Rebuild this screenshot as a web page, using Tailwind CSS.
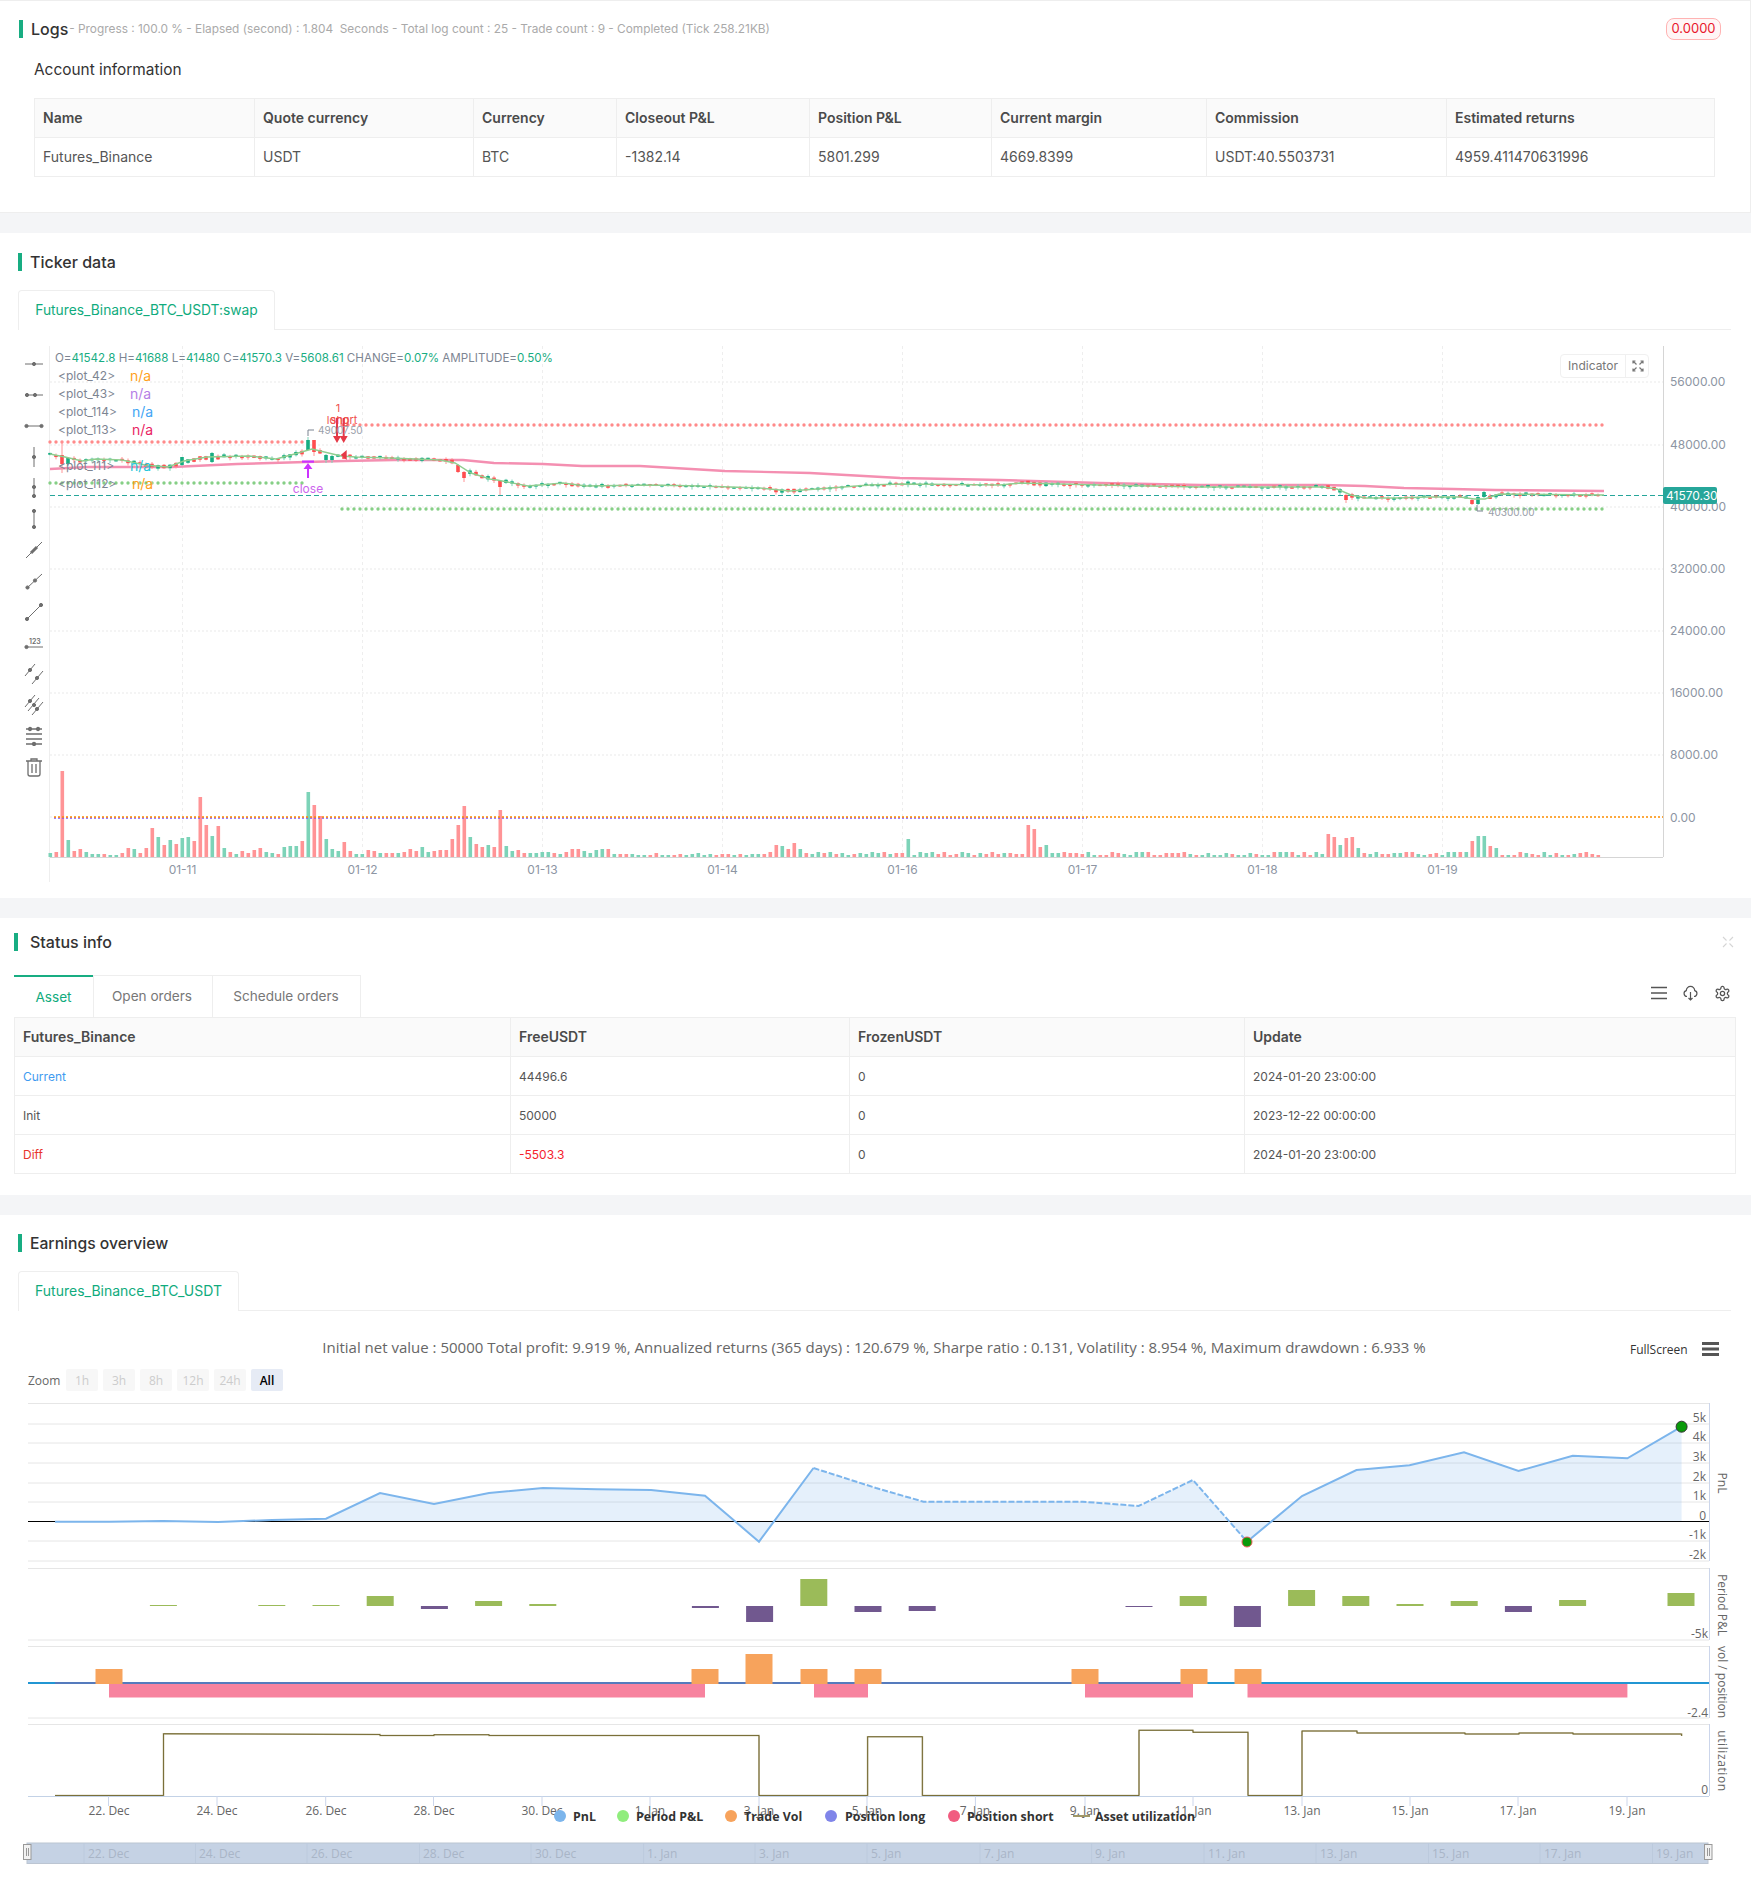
<!DOCTYPE html>
<html lang="en">
  <head>
    <meta charset="UTF-8" />
    <title>Backtest result</title>
    <script src="https://cdn.jsdelivr.net/npm/@tailwindcss/browser@4"></script>
  </head>
  <body class="bg-[#f4f5f7] font-['Inter',sans-serif] text-[#4a4a4a]">
    <!-- Logs -->
    <section class="h-[213px] bg-white border-t border-b border-r border-[#eeeeee] pt-[17px]">
      <div class="flex h-[22px] items-center justify-between pl-[19px] pr-[29px]">
        <div class="flex items-center">
          <span class="mr-2 h-[18px] w-1 bg-[#18ad82]"></span>
          <span class="text-base font-medium text-[#333]">Logs</span>
          <span class="ml-[1px] whitespace-pre pt-[1px] text-[11.85px] text-[#aaaaaa]">- Progress : 100.0 % - Elapsed (second) : 1.804  Seconds - Total log count : 25 - Trade count : 9 - Completed (Tick 258.21KB)</span>
        </div>
        <span class="flex h-[22px] w-[55px] items-center justify-center rounded-[8px] border border-[#ffb3b3] bg-[#fff5f5] text-[13px] text-[#e8172c]">0.0000</span>
      </div>
      <h3 class="ml-[34px] mt-[18px] h-6 text-[15.4px] leading-6 text-[#333]">Account information</h3>
      <table class="ml-[34px] mt-[16px] w-[1680px] table-fixed border-collapse text-sm">
        <colgroup>
          <col class="w-[220px]" /><col class="w-[219px]" /><col class="w-[143px]" /><col class="w-[193px]" /><col class="w-[182px]" /><col class="w-[215px]" /><col class="w-[240px]" /><col class="w-[268px]" />
        </colgroup>
        <thead class="bg-[#fafafa] text-left font-semibold">
          <tr class="h-[39px]">
            <th class="border border-[#eeeeee] px-2 font-semibold">Name</th>
            <th class="border border-[#eeeeee] px-2 font-semibold">Quote currency</th>
            <th class="border border-[#eeeeee] px-2 font-semibold">Currency</th>
            <th class="border border-[#eeeeee] px-2 font-semibold">Closeout P&amp;L</th>
            <th class="border border-[#eeeeee] px-2 font-semibold">Position P&amp;L</th>
            <th class="border border-[#eeeeee] px-2 font-semibold">Current margin</th>
            <th class="border border-[#eeeeee] px-2 font-semibold">Commission</th>
            <th class="border border-[#eeeeee] px-2 font-semibold">Estimated returns</th>
          </tr>
        </thead>
        <tbody class="text-[#555]">
          <tr class="h-[39px]">
            <td class="border border-[#eeeeee] px-2">Futures_Binance</td>
            <td class="border border-[#eeeeee] px-2">USDT</td>
            <td class="border border-[#eeeeee] px-2">BTC</td>
            <td class="border border-[#eeeeee] px-2">-1382.14</td>
            <td class="border border-[#eeeeee] px-2">5801.299</td>
            <td class="border border-[#eeeeee] px-2">4669.8399</td>
            <td class="border border-[#eeeeee] px-2">USDT:40.5503731</td>
            <td class="border border-[#eeeeee] px-2">4959.411470631996</td>
          </tr>
        </tbody>
      </table>
    </section>

    <!-- Ticker data -->
    <section class="mt-5 h-[665px] bg-white pt-5">
      <div class="flex h-[18px] items-center pl-[18px]">
        <span class="mr-2 h-[18px] w-1 bg-[#18ad82]"></span>
        <span class="text-base font-medium text-[#333]">Ticker data</span>
      </div>
      <div class="ml-[18px] mt-[19px] h-[40px] w-[1713px] border-b border-[#eeeeee]">
        <div class="flex h-10 w-[257px] items-center justify-center rounded-t-[4px] border border-b-0 border-[#eeeeee] bg-white pb-[1px] text-[13.8px] text-[#10ab7d]">Futures_Binance_BTC_USDT:swap</div>
      </div>
      <div class="relative h-[568px]">
        <svg class="absolute inset-0 block" width="1751" height="568" viewBox="0 330 1751 568">
          <g id="grid"></g>
          <g id="volume"></g>
          <g id="overlay"></g>
          <g id="candles"></g>
          <g id="overlayTop"></g>
          <g class="text-xs fill-[#8d95a3]">
            <text x="1670" y="386">56000.00</text>
            <text x="1670" y="449">48000.00</text>
            <text x="1670" y="511">40000.00</text>
            <text x="1670" y="573">32000.00</text>
            <text x="1670" y="635">24000.00</text>
            <text x="1670" y="697">16000.00</text>
            <text x="1670" y="759">8000.00</text>
            <text x="1670" y="822">0.00</text>
          </g>
          <g class="text-xs fill-[#8d95a3]" text-anchor="middle">
            <text x="182.5" y="874">01-11</text>
            <text x="362.5" y="874">01-12</text>
            <text x="542.5" y="874">01-13</text>
            <text x="722.5" y="874">01-14</text>
            <text x="902.5" y="874">01-16</text>
            <text x="1082.5" y="874">01-17</text>
            <text x="1262.5" y="874">01-18</text>
            <text x="1442.5" y="874">01-19</text>
          </g>
          <rect x="1663" y="487" width="54" height="17" rx="2" fill="#26a69a" />
          <text x="1666" y="500" class="text-xs fill-white">41570.30</text>
          <!-- trade marks -->
          <g class="text-[11px] fill-[#ef5350]" text-anchor="middle">
            <text x="338" y="412">1</text>
            <text x="338" y="424">long</text>
            <text x="344" y="424">short</text>
          </g>
          <path d="M337 418V438M343.7 418V438" stroke="#e53946" stroke-width="2" />
          <path d="M333 436H341L337 443ZM339.7 436H347.7L343.7 443Z" fill="#e53946" />
          <path d="M340.7 455L346.7 450V460Z" fill="#e53946" />
          <path d="M314 430H308V436" fill="none" stroke="#7a8391" stroke-width="1" />
          <text x="318" y="434" class="text-[10px] fill-[#9aa0aa]">49007.50</text>
          <path d="M1477 505V511H1483" fill="none" stroke="#7a8391" stroke-width="1" />
          <text x="1488" y="516" class="text-[10px] fill-[#9aa0aa]">40300.00</text>
          <rect x="302" y="460.5" width="12" height="2.2" fill="#cc33ff" />
          <path d="M308 463L312.5 469H309V478H307V469H303.5Z" fill="#cc33ff" />
          <text x="308" y="493" text-anchor="middle" class="text-xs fill-[#cc66ee]">close</text>
        </svg>

        <!-- drawing tools -->
        <div class="absolute left-[23px] top-[18.5px] flex flex-col text-[#6e6e6e]">
          <svg class="my-[5.5px] h-5 w-[22px]" viewBox="0 0 20 20" fill="none" stroke="currentColor"><path d="M1 10H19" /><circle cx="10" cy="10" r="1.6" fill="currentColor" /></svg>
          <svg class="my-[5.5px] h-5 w-[22px]" viewBox="0 0 20 20" fill="none" stroke="currentColor"><path d="M1 10H19" /><circle cx="3" cy="10" r="1.6" fill="currentColor" /><circle cx="11" cy="10" r="1.6" fill="currentColor" /></svg>
          <svg class="my-[5.5px] h-5 w-[22px]" viewBox="0 0 20 20" fill="none" stroke="currentColor"><path d="M2 10H18" /><circle cx="2.5" cy="10" r="1.6" fill="currentColor" /><circle cx="17.5" cy="10" r="1.6" fill="currentColor" /></svg>
          <svg class="my-[5.5px] h-5 w-[22px]" viewBox="0 0 20 20" fill="none" stroke="currentColor"><path d="M10 0V20" /><circle cx="10" cy="10" r="1.6" fill="currentColor" /></svg>
          <svg class="my-[5.5px] h-5 w-[22px]" viewBox="0 0 20 20" fill="none" stroke="currentColor"><path d="M10 0V20" /><circle cx="10" cy="9" r="1.6" fill="currentColor" /><circle cx="10" cy="18" r="1.6" fill="currentColor" /></svg>
          <svg class="my-[5.5px] h-5 w-[22px]" viewBox="0 0 20 20" fill="none" stroke="currentColor"><path d="M10 2V18" /><circle cx="10" cy="2" r="1.6" fill="currentColor" /><circle cx="10" cy="18" r="1.6" fill="currentColor" /></svg>
          <svg class="my-[5.5px] h-5 w-[22px]" viewBox="0 0 20 20" fill="none" stroke="currentColor"><path d="M2 18L18 2" /><path d="M7 13L13 7" stroke-width="3" /></svg>
          <svg class="my-[5.5px] h-5 w-[22px]" viewBox="0 0 20 20" fill="none" stroke="currentColor"><path d="M3 17L18 3" /><circle cx="3.5" cy="16.5" r="1.6" fill="currentColor" /><circle cx="11" cy="9.5" r="1.6" fill="currentColor" /></svg>
          <svg class="my-[5.5px] h-5 w-[22px]" viewBox="0 0 20 20" fill="none" stroke="currentColor"><path d="M3 17L17 3" /><circle cx="3" cy="17" r="1.6" fill="currentColor" /><circle cx="17" cy="3" r="1.6" fill="currentColor" /></svg>
          <svg class="my-[5.5px] h-5 w-[22px]" viewBox="0 0 20 20" fill="none" stroke="currentColor"><text x="5" y="11" stroke="none" fill="currentColor" class="text-[7px] font-semibold">123</text><path d="M2 14H19" /><circle cx="2.5" cy="14" r="1.6" fill="currentColor" /></svg>
          <svg class="my-[5.5px] h-5 w-[22px]" viewBox="0 0 20 20" fill="none" stroke="currentColor"><path d="M1 12L11 0M8 20L19 7" /><circle cx="6" cy="6" r="1.6" fill="currentColor" /><circle cx="13" cy="14" r="1.6" fill="currentColor" /></svg>
          <svg class="my-[5.5px] h-5 w-[22px]" viewBox="0 0 20 20" fill="none" stroke="currentColor"><path d="M1 12L11 0M4 16L15 3M8 20L19 7" /><circle cx="6" cy="6" r="1.6" fill="currentColor" /><circle cx="10" cy="10" r="1.6" fill="currentColor" /><circle cx="13" cy="14" r="1.6" fill="currentColor" /></svg>
          <svg class="my-[5.5px] h-5 w-[22px]" viewBox="0 0 20 20" fill="none" stroke="currentColor" stroke-width="1.3"><path d="M2 3H18M2 8H18M2 13H18M2 18H18" /><circle cx="6" cy="3" r="1.5" fill="currentColor" /><circle cx="14" cy="3" r="1.5" fill="currentColor" /><circle cx="10" cy="18" r="1.5" fill="currentColor" /></svg>
          <svg class="my-[5.5px] h-5 w-[22px]" viewBox="0 0 20 20" fill="none" stroke="currentColor" stroke-width="1.3"><path d="M2 4H18M7 4V2H13V4M4 4V17Q4 19 6 19H14Q16 19 16 17V4M8 7V16M12 7V16" /></svg>
        </div>

        <!-- series legend -->
        <div class="absolute left-[55px] top-[19px] text-[11.6px] leading-[18px] text-[#7d8592]">
          <div class="whitespace-pre">O=<span class="text-[#18ad82]">41542.8</span> H=<span class="text-[#18ad82]">41688</span> L=<span class="text-[#18ad82]">41480</span> C=<span class="text-[#18ad82]">41570.3</span> V=<span class="text-[#18ad82]">5608.61</span> CHANGE=<span class="text-[#18ad82]">0.07%</span> AMPLITUDE=<span class="text-[#18ad82]">0.50%</span></div>
          <div class="ml-[3px] flex h-[18px] text-xs/[18px]"><span class="w-[72px]">&lt;plot_42&gt;</span><span class="text-sm/[18px] text-[#ff9f1c]">n/a</span></div>
          <div class="ml-[3px] flex h-[18px] text-xs/[18px]"><span class="w-[72px]">&lt;plot_43&gt;</span><span class="text-sm/[18px] text-[#b47ee5]">n/a</span></div>
          <div class="ml-[3px] flex h-[18px] text-xs/[18px]"><span class="w-[74px]">&lt;plot_114&gt;</span><span class="text-sm/[18px] text-[#42a5f5]">n/a</span></div>
          <div class="ml-[3px] flex h-[18px] text-xs/[18px]"><span class="w-[74px]">&lt;plot_113&gt;</span><span class="text-sm/[18px] text-[#e91e63]">n/a</span></div>
          <div class="ml-[3px] mt-[18px] flex h-[18px] text-xs/[18px]"><span class="w-[72px]">&lt;plot_111&gt;</span><span class="text-sm/[18px] text-[#26c6da]">n/a</span></div>
          <div class="ml-[3px] flex h-[18px] text-xs/[18px]"><span class="w-[74px]">&lt;plot_112&gt;</span><span class="text-sm/[18px] text-[#ff9f1c]">n/a</span></div>
        </div>

        <div class="absolute left-[1560px] top-[24px] flex h-6 w-[89px] items-center rounded-[4px] border border-[#f0f0f0] bg-white text-xs text-[#777]">
          <span class="flex h-full w-[65px] items-center justify-center border-r border-[#f0f0f0]">Indicator</span>
          <svg class="ml-[6px] h-3 w-3" viewBox="0 0 12 12" fill="none" stroke="#777" stroke-width="1.2"><path d="M1 1L4.5 4.5M11 1L7.5 4.5M1 11L4.5 7.5M11 11L7.5 7.5M1 3.5V1H3.5M8.5 1H11V3.5M1 8.5V11H3.5M8.5 11H11V8.5" /></svg>
        </div>
      </div>
    </section>

    <!-- Status info -->
    <section class="mt-5 h-[277px] bg-white pt-[15px]">
      <div class="flex h-[18px] items-center justify-between pl-[14px] pr-[17px]">
        <div class="flex items-center">
          <span class="mr-3 h-[18px] w-1 bg-[#18ad82]"></span>
          <span class="text-base font-medium text-[#333]">Status info</span>
        </div>
        <svg class="h-3 w-3" viewBox="0 0 12 12" fill="none" stroke="#d5d5d5" stroke-width="1.1"><path d="M1 1L4.5 4.5M11 1L7.5 4.5M1 11L4.5 7.5M11 11L7.5 7.5" /></svg>
      </div>
      <div class="ml-[14px] mt-6 flex h-[42px] w-[1721px] items-stretch justify-between">
        <div class="flex text-[13.6px]">
          <span class="flex w-[79px] items-center justify-center border-t-2 border-[#18ad82] text-[#10ab7d]">Asset</span>
          <span class="flex w-[120px] items-center justify-center border-l border-r border-t border-[#eeeeee] pr-[2px] text-[#777]">Open orders</span>
          <span class="flex w-[148px] items-center justify-center border-r border-t border-[#eeeeee] pr-[1px] text-[#777]">Schedule orders</span>
        </div>
        <div class="flex items-center gap-[15px] pb-[6px] text-[#555]">
          <svg class="h-4 w-4" viewBox="0 0 16 16" fill="none" stroke="currentColor" stroke-width="1.5"><path d="M0 2.5H16M0 8H16M0 13.5H16" /></svg>
          <svg class="h-4 w-[17px]" viewBox="0 0 16 16" fill="none" stroke="currentColor" stroke-width="1.2"><path d="M4.5 11.5A3 3 0 0 1 3.8 5.6 4.2 4.2 0 0 1 12.2 5.6 3 3 0 0 1 11.5 11.5M8 7V15M6 13L8 15L10 13" /></svg>
          <svg class="mr-[4px] h-[17px] w-[17px]" viewBox="0 0 24 24" fill="none" stroke="currentColor" stroke-width="1.8"><path d="M12.22 2h-.44a2 2 0 0 0-2 2v.18a2 2 0 0 1-1 1.73l-.43.25a2 2 0 0 1-2 0l-.15-.08a2 2 0 0 0-2.73.73l-.22.38a2 2 0 0 0 .73 2.73l.15.1a2 2 0 0 1 1 1.72v.51a2 2 0 0 1-1 1.74l-.15.09a2 2 0 0 0-.73 2.73l.22.38a2 2 0 0 0 2.73.73l.15-.08a2 2 0 0 1 2 0l.43.25a2 2 0 0 1 1 1.73V20a2 2 0 0 0 2 2h.44a2 2 0 0 0 2-2v-.18a2 2 0 0 1 1-1.73l.43-.25a2 2 0 0 1 2 0l.15.08a2 2 0 0 0 2.73-.73l.22-.39a2 2 0 0 0-.73-2.73l-.15-.08a2 2 0 0 1-1-1.74v-.5a2 2 0 0 1 1-1.74l.15-.09a2 2 0 0 0 .73-2.73l-.22-.38a2 2 0 0 0-2.73-.73l-.15.08a2 2 0 0 1-2 0l-.43-.25a2 2 0 0 1-1-1.73V4a2 2 0 0 0-2-2z" /><circle cx="12" cy="12" r="3" /></svg>
        </div>
      </div>
      <table class="ml-[14px] w-[1721px] table-fixed border-collapse text-xs">
        <colgroup>
          <col class="w-[496px]" /><col class="w-[339px]" /><col class="w-[395px]" /><col class="w-[491px]" />
        </colgroup>
        <thead class="bg-[#fafafa] text-left text-sm">
          <tr class="h-[39px]">
            <th class="border border-[#eeeeee] px-2 font-semibold">Futures_Binance</th>
            <th class="border border-[#eeeeee] px-2 font-semibold">FreeUSDT</th>
            <th class="border border-[#eeeeee] px-2 font-semibold">FrozenUSDT</th>
            <th class="border border-[#eeeeee] px-2 font-semibold">Update</th>
          </tr>
        </thead>
        <tbody class="text-[#555]">
          <tr class="h-[39px]">
            <td class="border border-[#eeeeee] px-2 pt-[2px] text-[#3f9bf0]">Current</td>
            <td class="border border-[#eeeeee] px-2 pt-[2px]">44496.6</td>
            <td class="border border-[#eeeeee] px-2 pt-[2px]">0</td>
            <td class="border border-[#eeeeee] px-2 pt-[2px]">2024-01-20 23:00:00</td>
          </tr>
          <tr class="h-[39px]">
            <td class="border border-[#eeeeee] px-2 pt-[2px]">Init</td>
            <td class="border border-[#eeeeee] px-2 pt-[2px]">50000</td>
            <td class="border border-[#eeeeee] px-2 pt-[2px]">0</td>
            <td class="border border-[#eeeeee] px-2 pt-[2px]">2023-12-22 00:00:00</td>
          </tr>
          <tr class="h-[39px]">
            <td class="border border-[#eeeeee] px-2 pt-[2px] text-[#e8342c]">Diff</td>
            <td class="border border-[#eeeeee] px-2 pt-[2px] text-[#f5222d]">-5503.3</td>
            <td class="border border-[#eeeeee] px-2 pt-[2px]">0</td>
            <td class="border border-[#eeeeee] px-2 pt-[2px]">2024-01-20 23:00:00</td>
          </tr>
        </tbody>
      </table>
    </section>

    <!-- Earnings overview -->
    <section class="mt-5 h-[678px] bg-white pt-[19px]">
      <div class="flex h-[18px] items-center pl-[18px]">
        <span class="mr-2 h-[18px] w-1 bg-[#18ad82]"></span>
        <span class="pt-[1px] text-[15.7px] font-medium text-[#333]">Earnings overview</span>
      </div>
      <div class="ml-[18px] mt-[19px] h-[40px] w-[1713px] border-b border-[#eeeeee]">
        <div class="flex h-10 w-[221px] items-center justify-center rounded-t-[4px] border border-b-0 border-[#eeeeee] bg-white pb-[2px] text-sm text-[#10ab7d]">Futures_Binance_BTC_USDT</div>
      </div>
      <svg class="block font-['Open_Sans',sans-serif]" width="1751" height="582" viewBox="0 1311 1751 582">
        <text x="874" y="1353" text-anchor="middle" class="text-[15px] fill-[#666]">Initial net value : 50000 Total profit: 9.919 %, Annualized returns (365 days) : 120.679 %, Sharpe ratio : 0.131, Volatility : 8.954 %, Maximum drawdown : 6.933 %</text>
        <text x="1630" y="1354" class="text-xs fill-[#333]">FullScreen</text>
        <path d="M1702 1343.5H1719M1702 1349H1719M1702 1354.5H1719" stroke="#555" stroke-width="3" />

        <text x="28" y="1385" class="text-xs fill-[#666]">Zoom</text>
        <g fill="#f7f7f7">
          <rect x="66" y="1369" width="32" height="22" rx="2" />
          <rect x="103" y="1369" width="32" height="22" rx="2" />
          <rect x="140" y="1369" width="32" height="22" rx="2" />
          <rect x="177" y="1369" width="32" height="22" rx="2" />
          <rect x="214" y="1369" width="32" height="22" rx="2" />
          <rect x="251" y="1369" width="32" height="22" rx="2" fill="#e6ebf5" />
        </g>
        <g class="text-xs fill-[#cccccc]" text-anchor="middle">
          <text x="82" y="1385">1h</text>
          <text x="119" y="1385">3h</text>
          <text x="156" y="1385">8h</text>
          <text x="193" y="1385">12h</text>
          <text x="230" y="1385">24h</text>
          <text x="267" y="1385" class="font-semibold fill-black">All</text>
        </g>

        <g id="earnings"></g>

        <g class="text-xs fill-[#666]" text-anchor="end">
          <text x="1706" y="1422">5k</text>
          <text x="1706" y="1441">4k</text>
          <text x="1706" y="1461">3k</text>
          <text x="1706" y="1481">2k</text>
          <text x="1706" y="1500">1k</text>
          <text x="1706" y="1520">0</text>
          <text x="1706" y="1539">-1k</text>
          <text x="1706" y="1559">-2k</text>
          <text x="1708" y="1638">-5k</text>
          <text x="1708" y="1717">-2.4</text>
          <text x="1708" y="1794">0</text>
        </g>
        <g class="text-xs fill-[#666]" text-anchor="middle">
          <text transform="translate(1718 1483) rotate(90)">PnL</text>
          <text transform="translate(1718 1605) rotate(90)">Period P&amp;L</text>
          <text transform="translate(1718 1682) rotate(90)">vol / position</text>
          <text transform="translate(1718 1761) rotate(90)" class="tracking-[0.6px]">utilization</text>
        </g>

        <g class="text-xs fill-[#666]" text-anchor="middle">
          <text x="109" y="1815">22. Dec</text>
          <text x="217" y="1815">24. Dec</text>
          <text x="326" y="1815">26. Dec</text>
          <text x="434" y="1815">28. Dec</text>
          <text x="542" y="1815">30. Dec</text>
          <text x="650" y="1815">1. Jan</text>
          <text x="759" y="1815">3. Jan</text>
          <text x="867" y="1815">5. Jan</text>
          <text x="975" y="1815">7. Jan</text>
          <text x="1085" y="1815">9. Jan</text>
          <text x="1193" y="1815">11. Jan</text>
          <text x="1302" y="1815">13. Jan</text>
          <text x="1410" y="1815">15. Jan</text>
          <text x="1518" y="1815">17. Jan</text>
          <text x="1627" y="1815">19. Jan</text>
        </g>

        <circle cx="560" cy="1816" r="6" fill="#7cb5ec" />
        <circle cx="623" cy="1816" r="6" fill="#90ed7d" />
        <circle cx="731" cy="1816" r="6" fill="#f7a35c" />
        <circle cx="831" cy="1816" r="6" fill="#8085e9" />
        <circle cx="954" cy="1816" r="6" fill="#f15c80" />
        <path d="M1073 1816H1090" stroke="#a09868" stroke-width="2" />
        <g class="text-[12.4px] font-bold fill-[#333]">
          <text x="573" y="1821">PnL</text>
          <text x="636" y="1821">Period P&amp;L</text>
          <text x="744" y="1821">Trade Vol</text>
          <text x="845" y="1821">Position long</text>
          <text x="967" y="1821">Position short</text>
          <text x="1095" y="1821">Asset utilization</text>
        </g>

        <rect x="27" y="1843" width="1681" height="20.5" fill="#c5d2e4" stroke="#bcc5d2" />
        <g id="navGrid"></g>
        <g class="text-xs fill-[#a9b5c7]">
          <text x="88" y="1858">22. Dec</text>
          <text x="199" y="1858">24. Dec</text>
          <text x="311" y="1858">26. Dec</text>
          <text x="423" y="1858">28. Dec</text>
          <text x="535" y="1858">30. Dec</text>
          <text x="647" y="1858">1. Jan</text>
          <text x="759" y="1858">3. Jan</text>
          <text x="871" y="1858">5. Jan</text>
          <text x="984" y="1858">7. Jan</text>
          <text x="1095" y="1858">9. Jan</text>
          <text x="1208" y="1858">11. Jan</text>
          <text x="1320" y="1858">13. Jan</text>
          <text x="1432" y="1858">15. Jan</text>
          <text x="1544" y="1858">17. Jan</text>
          <text x="1656" y="1858">19. Jan</text>
        </g>
        <g fill="#f2f2f2" stroke="#999">
          <rect x="23.5" y="1844.5" width="7.5" height="15" />
          <rect x="1704.5" y="1844.5" width="7.5" height="15" />
          <path d="M26.5 1848V1856M28.5 1848V1856M1707.5 1848V1856M1709.5 1848V1856" fill="none" />
        </g>
      </svg>
    </section>

    <script>
      const NS = "http://www.w3.org/2000/svg";
      function add(parent, tag, attrs) {
        const el = document.createElementNS(NS, tag);
        for (const k in attrs) el.setAttribute(k, attrs[k]);
        parent.appendChild(el);
        return el;
      }
      const pts = (list) => list.map((p) => p.join(",")).join(" ");
      function line(parent, list, attrs) {
        return add(parent, "polyline", Object.assign({ points: pts(list), fill: "none" }, attrs));
      }

      // ticker chart
      const grid = document.getElementById("grid");
      [382, 445, 507, 569, 631, 693, 755, 817].forEach((y) => {
        add(grid, "line", { x1: 50, x2: 1663, y1: y, y2: y, stroke: "#e9e9e9", "stroke-dasharray": "2 2" });
      });
      [182.5, 362.5, 542.5, 722.5, 902.5, 1082.5, 1262.5, 1442.5].forEach((x) => {
        add(grid, "line", { x1: x, x2: x, y1: 346, y2: 857, stroke: "#eeeeee", "stroke-dasharray": "3 3" });
      });
      add(grid, "line", { x1: 49.5, x2: 49.5, y1: 346, y2: 882, stroke: "#eeeeee" });
      add(grid, "line", { x1: 1663.5, x2: 1663.5, y1: 346, y2: 857, stroke: "#d5d5d5" });
      add(grid, "line", { x1: 50, x2: 1663, y1: 857.5, y2: 857.5, stroke: "#d5d5d5" });

      // volume: positive is a green bar, negative a red one
      const vol = [4,-5,-86,17,-6,-8,5,3,3,-3,2,2,-4,-9,8,-4,-9,-29,20,-12,17,-13,19,20,-16,-60,-32,21,-31,9,-5,3,-6,-4,-7,-9,5,4,-3,10,11,11,-16,65,-52,-41,18,8,6,-15,-6,3,3,-7,-6,4,-4,-4,4,-5,-8,-6,10,5,-6,-7,-7,-18,-32,-51,20,-13,-10,12,-10,-47,11,6,-7,-4,4,4,5,5,-4,3,-5,-8,-8,6,4,7,8,-8,3,-3,-3,3,2,2,-2,-4,2,2,-2,-3,2,3,4,2,3,-2,-3,-3,2,-3,2,3,3,-3,-5,-12,11,-8,-14,8,-4,3,5,-4,5,-3,4];
      let seed = 7;
      const rnd = () => (seed = (seed * 16807) % 2147483647) / 2147483647;
      while (vol.length < 259) {
        const h = 2 + Math.floor(rnd() * 4);
        vol.push(rnd() > 0.5 ? h : -h);
      }
      const peaks = { 143: 18, 163: -32, 164: -28, 165: -10, 166: 12, 213: -23, 214: -20, 215: 12, 216: -19, 217: -20, 218: 9, 237: -16, 238: 21, 239: 21, 240: -11, 241: 9 };
      for (const i in peaks) vol[i] = peaks[i];

      const volume = document.getElementById("volume");
      vol.forEach((v, i) => {
        const h = Math.abs(v);
        add(volume, "rect", { x: 48.5 + 6 * i, y: 857 - h, width: 3.6, height: h, fill: v > 0 ? "#7dd3b8" : "#ff9496" });
      });
      add(volume, "line", { x1: 54, x2: 1087, y1: 818, y2: 818, stroke: "#7c4dff", "stroke-width": 1.5, "stroke-dasharray": "2 2" });
      add(volume, "line", { x1: 54, x2: 1663, y1: 817, y2: 817, stroke: "#ff8f00", "stroke-width": 1.5, "stroke-dasharray": "2 2" });

      // dotted stop levels and the averages
      const overlay = document.getElementById("overlay");
      const dots = [
        [50, 303, 442, "#ff8a8a"],
        [342, 1606, 425, "#ff8a8a"],
        [50, 303, 483, "#86cf86"],
        [342, 1606, 509, "#86cf86"],
      ];
      dots.forEach(([a, b, y, c]) => {
        add(overlay, "line", { x1: a, x2: b, y1: y, y2: y, stroke: c, "stroke-width": 3.4, "stroke-linecap": "round", "stroke-dasharray": "0 6" });
      });
      add(overlay, "line", { x1: 50, x2: 1715, y1: 495.5, y2: 495.5, stroke: "#26a69a", "stroke-dasharray": "5 3" });

      const avgLine = [[50,454],[65,457],[82,461],[96,459],[122,460],[145,465],[168,467],[184,461],[207,457],[249,456],[276,459],[291,455],[312,449],[341,456],[356,457],[390,458],[440,460],[455,463],[471,473],[490,479],[497,480],[528,486],[563,483],[586,486],[650,485],[700,486],[760,488],[790,491],[830,488],[870,485],[900,484],[1000,485],[1020,483],[1100,485],[1200,487],[1323,487],[1337,489],[1351,495],[1365,498],[1397,498],[1428,497],[1460,497],[1474,499],[1485,499],[1499,494],[1604,495]];
      const pinkLine = [[50,469],[88,467],[172,467],[237,464],[306,462],[344,461],[394,460],[463,460],[494,463],[543,464],[582,466],[640,466],[725,471],[810,473],[900,478],[1000,480],[1100,483],[1200,485],[1323,485],[1365,486],[1404,488],[1453,489],[1495,490],[1604,491]];
      line(overlay, pinkLine, { stroke: "#f48fb1", "stroke-width": 2.4 });

      function lineY(x) {
        for (let i = 1; i < avgLine.length; i++) {
          if (x <= avgLine[i][0]) {
            const [a, b] = [avgLine[i - 1], avgLine[i]];
            return a[1] + ((b[1] - a[1]) * (x - a[0])) / (b[0] - a[0]);
          }
        }
        return 495;
      }

      // candles: hand-read ones are top, bottom, wick top, wick bottom
      const fixed = { 2: [455,464,441,473], 3: [458,464,457,466], 22: [457,465,457,466], 27: [453,462,452,463], 43: [440,450,437,450], 44: [440,452,440,456], 46: [455,460,454,463], 47: [456,460,455,463], 68: [465,472,464,473], 69: [472,478,471,482], 75: [481,487,481,495], 216: [495,500,494,503], 237: [500,504,499,505], 238: [497,504,496,505], 239: [492,497,491,498] };
      const candles = document.getElementById("candles");
      vol.forEach((v, i) => {
        const x = 50 + 6 * i;
        const color = v > 0 ? "#18ad82" : "#ff4d4f";
        let c = fixed[i];
        if (!c) {
          const h = 1 + Math.min(Math.abs(v) / 5, 2.5);
          const mid = lineY(x) + (rnd() - 0.5) * 2;
          c = [mid - h / 2, mid + h / 2, mid - h / 2 - rnd() * 2, mid + h / 2 + rnd() * 3];
        }
        add(candles, "line", { x1: x, x2: x, y1: c[2], y2: c[3], stroke: v > 0 ? "#7dd3b8" : "#ff9496" });
        add(candles, "rect", { x: x - 1.8, y: c[0], width: 3.6, height: c[1] - c[0], fill: color });
      });
      line(document.getElementById("overlayTop"), avgLine, { stroke: "#8fce8f", "stroke-width": 1.4 });

      // earnings panels
      const e = document.getElementById("earnings");
      const W = (y) => add(e, "line", { x1: 28, x2: 1709, y1: y, y2: y, stroke: "#e6e6e6" });
      [1403.5, 1424, 1443, 1463, 1483, 1502, 1541, 1561, 1568.5, 1640, 1646.5, 1718, 1724.5].forEach(W);
      [[1403, 1561], [1568, 1640], [1646, 1718], [1724, 1796]].forEach(([a, b]) => {
        add(e, "line", { x1: 1709.5, x2: 1709.5, y1: a, y2: b, stroke: "#ccd6eb" });
      });

      const pnl = [[55,1521.7],[109,1521.7],[163,1521],[218,1522],[272,1520],[326,1518.7],[380,1493],[434,1504],[489,1493],[543,1488],[597,1489.3],[651,1490],[705,1495.7],[759,1541.7],[813.5,1468],[876,1488],[923.5,1501.7],[1082.7,1501.7],[1138.6,1506],[1193,1480],[1247,1541.7],[1302,1496],[1356.5,1470],[1409.5,1465.3],[1464,1452.3],[1518.5,1471],[1572.7,1455.7],[1627.4,1458.3],[1681.6,1426.7]];
      add(e, "polygon", { points: pts([[55, 1521], ...pnl, [1681.6, 1521]]), fill: "#7cb5ec", "fill-opacity": 0.2 });
      add(e, "line", { x1: 28, x2: 1709, y1: 1521.5, y2: 1521.5, stroke: "#000" });
      line(e, pnl.slice(0, 15), { stroke: "#7cb5ec", "stroke-width": 2 });
      line(e, pnl.slice(14, 21), { stroke: "#7cb5ec", "stroke-width": 2, "stroke-dasharray": "6 2" });
      line(e, pnl.slice(20), { stroke: "#7cb5ec", "stroke-width": 2 });
      add(e, "circle", { cx: 1247, cy: 1542, r: 5, fill: "#0a9a0a", stroke: "#f15c5c" });
      add(e, "circle", { cx: 1681.6, cy: 1426.7, r: 5.5, fill: "#0a9a0a", stroke: "#333" });

      // period P&L bars: day index, top, bottom
      const dayX = (k) => 55 + 54.2 * k;
      const period = [[2,1605,1606],[4,1605,1606],[5,1605,1606],[6,1596,1606],[7,1606,1609],[8,1601,1606],[9,1604,1606],[12,1606,1608],[13,1606,1622],[14,1579,1606],[15,1606,1612],[16,1606,1611],[20,1606,1607],[21,1596,1606],[22,1606,1627],[23,1590,1606],[24,1596,1606],[25,1604,1606],[26,1601,1606],[27,1606,1612],[28,1600,1606],[30,1593,1606]];
      period.forEach(([k, a, b]) => {
        add(e, "rect", { x: dayX(k) - 13.5, y: a, width: 27, height: b - a, fill: a < 1606 ? "#9bbb59" : "#71588f" });
      });

      // trade volume and position
      add(e, "line", { x1: 28, x2: 1709, y1: 1683, y2: 1683, stroke: "#2196d3", "stroke-width": 2 });
      add(e, "line", { x1: 55, x2: 1194, y1: 1683, y2: 1683, stroke: "#8a5fa8", "stroke-opacity": 0.5, "stroke-width": 2 });
      [[109,1669],[705,1669],[759,1654],[814,1669],[868,1669],[1085,1669],[1194,1669],[1248,1669]].forEach(([x, y]) => {
        add(e, "rect", { x: x - 13.5, y: y, width: 27, height: 1684 - y, fill: "#f7a35c" });
      });
      [[109,705],[814,868],[1085,1193],[1247.5,1627.4]].forEach(([a, b]) => {
        add(e, "rect", { x: a, y: 1684, width: b - a, height: 13.5, fill: "#f7839f" });
      });

      // asset utilization
      const util = [[55,1795.5],[163.5,1795.5],[163.5,1733.7],[380,1734.5],[380,1735.5],[434,1735.5],[434,1734.7],[489,1734.7],[489,1735.5],[759,1735.5],[759,1795.5],[867.6,1795.5],[867.6,1736.7],[922.4,1736.7],[922.4,1795.5],[1139,1795.5],[1139,1730.3],[1193,1730.3],[1193,1732.3],[1248,1732.3],[1248,1795.5],[1302,1795.5],[1302,1731],[1357,1731],[1357,1733],[1465,1733],[1465,1734],[1519,1734],[1519,1733],[1573,1733],[1573,1734],[1681.6,1734],[1681.6,1736]];
      line(e, util, { stroke: "#b8b290", "stroke-width": 1.6 });
      line(e, util, { stroke: "#5e5214", "stroke-width": 0.7 });

      add(e, "line", { x1: 28, x2: 1709, y1: 1796.5, y2: 1796.5, stroke: "#c3d2e6" });
      [108.5,217,325.7,433.5,542,650,759,867,975.4,1085,1193,1302,1410,1518,1627].forEach((x) => {
        add(e, "line", { x1: x, x2: x, y1: 1796, y2: 1806, stroke: "#ccd6eb" });
      });

      const nav = document.getElementById("navGrid");
      [84,195.5,307,419.5,531,643.6,755,867,980,1091.6,1204,1316,1428.5,1540,1652.5].forEach((x) => {
        add(nav, "line", { x1: x, x2: x, y1: 1843, y2: 1863, stroke: "#bccadd" });
      });
    </script>
  </body>
</html>
